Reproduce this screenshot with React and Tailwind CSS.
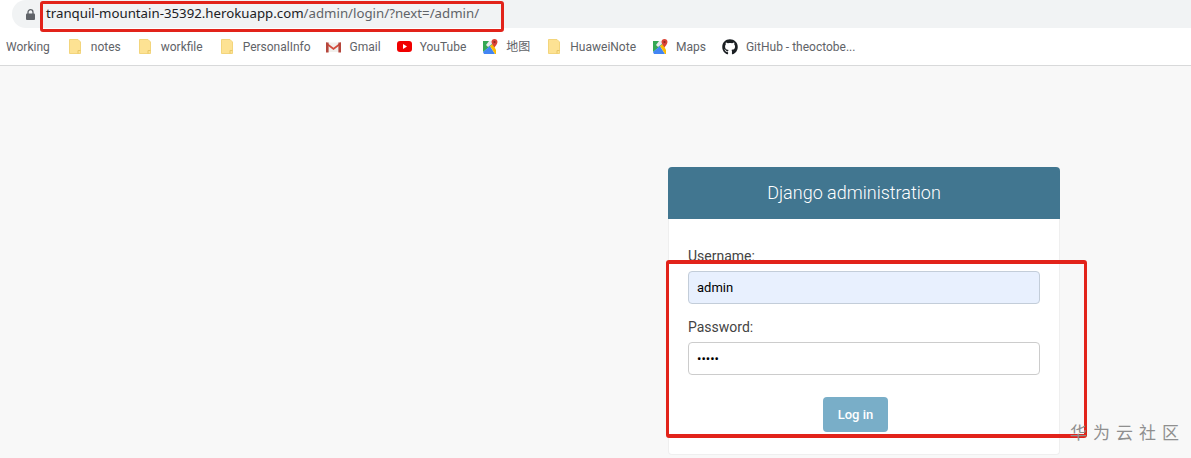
import { FaGithub } from "react-icons/fa";

const uiFont = { fontFamily: '"Noto Sans", "Noto Sans CJK SC", sans-serif' };
const barFont = { fontFamily: 'Roboto, "Noto Sans CJK SC", sans-serif' };

const FolderIcon = () => (
  <svg width="12" height="15" viewBox="0 0 12 15" className="shrink-0">
    <path d="M0.5 0.5H9L11.5 3V14.5H0.5Z" fill="#fde293" stroke="#f3d57c" />
    <path d="M9 14.5V11.5H11.5" fill="none" stroke="#e8c766" />
  </svg>
);

const GmailIcon = () => (
  <svg width="15" height="12" viewBox="0 0 15 12" className="shrink-0">
    <path d="M1 1.5H14V11H1Z" fill="#f1efec" />
    <path d="M0.2 1.2 7.5 6.8 14.8 1.2V3.4L7.5 9 0.2 3.4Z" fill="#d34a3c" />
    <path d="M0 1.5H2.6V11.5H0ZM12.4 1.5H15V11.5H12.4Z" fill="#b5463c" />
  </svg>
);

const YoutubeIcon = () => (
  <svg width="15" height="11" viewBox="0 0 15 11" className="shrink-0">
    <rect width="15" height="11" rx="3" fill="#f00000" />
    <path d="M6 3 10 5.5 6 8Z" fill="#fff" />
  </svg>
);

const MapsIcon = () => (
  <svg width="15" height="15" viewBox="0 0 15 15" className="shrink-0">
    <path d="M0 2H9V6L0 13Z" fill="#34a853" />
    <path d="M0 13 7 7 12 15H1Z" fill="#4285f4" />
    <path d="M7 7 10 5 13 11V15H12Z" fill="#fbbc04" />
    <path d="M3 6 6 2H9V5L5 8Z" fill="#e8eaed" />
    <path d="M11.5 0C9.7 0 8.5 1.3 8.5 3 8.5 5 11 7.5 11.5 8.5 12 7.5 14.5 5 14.5 3 14.5 1.3 13.3 0 11.5 0Z" fill="#db4437" />
    <circle cx="11.5" cy="3" r="1.1" fill="#8c2a20" />
  </svg>
);

const bookmarks = [
  { label: "notes", icon: <FolderIcon />, gap: "gap-[10px]", ml: "ml-[19px]" },
  { label: "workfile", icon: <FolderIcon />, gap: "gap-[10px]", ml: "ml-[18px]" },
  { label: "PersonalInfo", icon: <FolderIcon />, gap: "gap-[10px]", ml: "ml-[18px]" },
  { label: "Gmail", icon: <GmailIcon />, gap: "gap-[9px]", ml: "ml-[15px]" },
  { label: "YouTube", icon: <YoutubeIcon />, gap: "gap-[8px]", ml: "ml-[16px]" },
  { label: "地图", icon: <MapsIcon />, gap: "gap-[8px]", ml: "ml-[17px]" },
  { label: "HuaweiNote", icon: <FolderIcon />, gap: "gap-[10px]", ml: "ml-[18px]" },
  { label: "Maps", icon: <MapsIcon />, gap: "gap-[8px]", ml: "ml-[17px]" },
  {
    label: "GitHub - theoctobe...",
    icon: <FaGithub className="shrink-0 text-[16px] text-[#1b1f23]" />,
    gap: "gap-[8px]",
    ml: "ml-[16px]",
  },
];

const App = () => {
  return (
    <div className="relative h-[458px] w-[1191px] overflow-hidden bg-[#f8f8f8]">
      <div className="h-[66px] border-b border-[#d8d9da] bg-white">
        <div className="ml-3 flex h-[28px] w-[1179px] items-center rounded-l-full bg-[#f1f3f4] pl-[14px]" style={uiFont}>
          <svg width="9" height="11" viewBox="0 0 9 11" className="shrink-0">
            <path d="M2 5V3.2a2.5 2.5 0 0 1 5 0V5" fill="none" stroke="#5f6368" strokeWidth="1.3" />
            <rect y="4.5" width="9" height="6.5" rx="1" fill="#5f6368" />
          </svg>
          <p className="ml-[11px] whitespace-nowrap text-[13.25px] text-[#202124]">
            tranquil-mountain-35392.herokuapp.com
            <span className="text-[#5f6368]">/admin/login/?next=/admin/</span>
          </p>
        </div>
        <div className="flex h-[37px] items-center pl-[6px] text-[12px] text-[#5f6368]" style={barFont}>
          <span>Working</span>
          {bookmarks.map((b) => (
            <div key={b.label} className={`flex items-center ${b.gap} ${b.ml}`}>
              {b.icon}
              <span className="whitespace-nowrap">{b.label}</span>
            </div>
          ))}
        </div>
      </div>

      <div className="ml-[668px] mt-[101px] h-[288px] w-[392px] rounded-[4px] border-x border-b border-[#efefef] bg-white font-['Roboto',sans-serif]">
        <div className="-mx-px flex h-[52px] items-center justify-center rounded-t-[4px] bg-[#417690] pb-[2px] pr-[20px] text-[18px] font-light text-white">
          Django administration
        </div>
        <form className="flex flex-col px-[19px] pt-[27px]">
          <label className="text-[14px] leading-[20px] text-[#444]">Username:</label>
          <input
            readOnly
            value="admin"
            className="mt-[5px] h-[33px] rounded-[4px] border border-[#c3cdd9] bg-[#e8f0fe] px-2 text-[13px] text-black outline-none"
          />
          <label className="mt-[13px] text-[14px] leading-[20px] text-[#444]">Password:</label>
          <input
            readOnly
            type="password"
            value="admin"
            className="mt-[5px] h-[33px] rounded-[4px] border border-[#cccccc] bg-white px-2 text-[13px] text-black outline-none"
          />
          <button
            type="button"
            className="ml-[135px] mt-[22px] h-[35px] w-[65px] rounded-[4px] bg-[#79aec8] text-[13px] font-medium text-white"
          >
            Log in
          </button>
        </form>
      </div>

      {/* red annotation boxes drawn over the screenshot */}
      <div className="absolute left-[40px] top-[1px] h-[31px] w-[464px] rounded-[3px] border-[3px] border-[#e2231a]" />
      <div className="absolute left-[666px] top-[260px] h-[178px] w-[421px] rounded-[3px] border-[3px] border-b-4 border-t-4 border-[#e2231a]" />

      <div className="absolute left-[1070px] top-[420px] whitespace-nowrap font-['Noto_Sans_CJK_SC',sans-serif] text-[17px] leading-[24px] tracking-[6px] text-[#8f8f8f]">
        华为云社区
      </div>
    </div>
  );
};

export default App;
